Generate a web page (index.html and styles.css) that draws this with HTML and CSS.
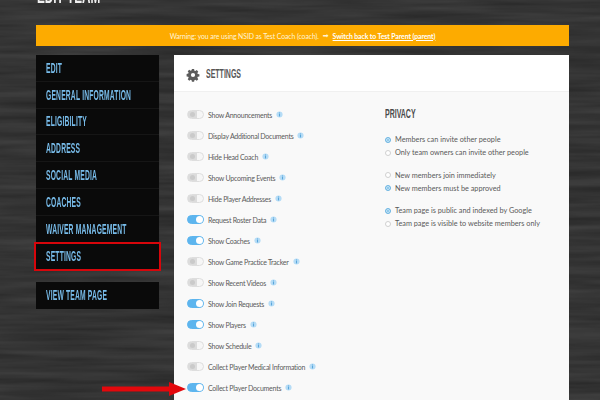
FILE: index.html
```html
<!DOCTYPE html>
<html lang="en">
<head>
<meta charset="utf-8">
<title>Edit Team</title>
<link rel="stylesheet" href="styles.css">
</head>
<body>
<svg class="wood" aria-hidden="true">
  <filter id="grain" x="0" y="0" width="100%" height="100%" color-interpolation-filters="sRGB">
    <feTurbulence type="fractalNoise" baseFrequency="0.008 0.13" numOctaves="3" seed="7"/>
    <feColorMatrix type="matrix" values="0.13 0 0 0 0.14  0.13 0 0 0 0.14  0.13 0 0 0 0.14  0 0 0 0 1"/>
  </filter>
  <rect width="600" height="400" filter="url(#grain)"/>
  <symbol id="info" viewBox="0 0 8 8">
    <circle cx="4" cy="4" r="3.500" fill="#b5dcf6"/>
    <rect x="3.400" y="3.300" width="1.200" height="2.900" fill="#5aa6da"/>
    <rect x="3.400" y="1.700" width="1.200" height="1.100" fill="#5aa6da"/>
  </symbol>
</svg>
<div class="page">
  <header class="top"><h1 class="title"><span class="squeeze">EDIT TEAM</span></h1></header>
  <div class="warning">
    <span>Warning: you are using NSID as Test Coach (coach).</span>
    <span class="arrow-glyph">➡</span>
    <a class="switch" href="#">Switch back to Test Parent (parent)</a>
  </div>
  <div class="columns">
    <nav class="side">
      <ul class="menu">
        <li class="item"><span class="squeeze">EDIT</span></li>
        <li class="item"><span class="squeeze">GENERAL INFORMATION</span></li>
        <li class="item"><span class="squeeze">ELIGIBILITY</span></li>
        <li class="item"><span class="squeeze">ADDRESS</span></li>
        <li class="item"><span class="squeeze">SOCIAL MEDIA</span></li>
        <li class="item"><span class="squeeze">COACHES</span></li>
        <li class="item"><span class="squeeze">WAIVER MANAGEMENT</span></li>
        <li class="item marked"><span class="squeeze">SETTINGS</span></li>
      </ul>
      <ul class="menu">
        <li class="item"><span class="squeeze">VIEW TEAM PAGE</span></li>
      </ul>
    </nav>
    <main class="panel">
      <div class="panel-head">
        <svg class="gear" viewBox="0 0 24 24"><path fill="#5b5b5b" fill-rule="evenodd" d="M9.800 0h4.400l.6 3.300 1.900.8 2.800-1.900 3.100 3.100-1.900 2.800.8 1.900 3.300.6v4.400l-3.300.6-.8 1.900 1.900 2.800-3.100 3.100-2.800-1.900-1.900.8-.6 3.300H9.800l-.6-3.300-1.900-.8-2.800 1.900-3.100-3.100 1.900-2.800-.8-1.900-3.300-.6V9.800l3.300-.6.8-1.900L1.400 4.500l3.100-3.100 2.800 1.900 1.900-.8zM12 7.800a4.200 4.200 0 1 0 0 8.400 4.200 4.200 0 0 0 0-8.400z"/></svg>
        <h2 class="panel-title"><span class="squeeze">SETTINGS</span></h2>
      </div>
      <div class="panel-body">
        <ul class="toggles">
          <li class="row"><span class="switcher"></span><span>Show Announcements</span><svg class="info"><use href="#info"/></svg></li>
          <li class="row"><span class="switcher"></span><span>Display Additional Documents</span><svg class="info"><use href="#info"/></svg></li>
          <li class="row"><span class="switcher"></span><span>Hide Head Coach</span><svg class="info"><use href="#info"/></svg></li>
          <li class="row"><span class="switcher"></span><span>Show Upcoming Events</span><svg class="info"><use href="#info"/></svg></li>
          <li class="row"><span class="switcher"></span><span>Hide Player Addresses</span><svg class="info"><use href="#info"/></svg></li>
          <li class="row"><span class="switcher on"></span><span>Request Roster Data</span><svg class="info"><use href="#info"/></svg></li>
          <li class="row"><span class="switcher on"></span><span>Show Coaches</span><svg class="info"><use href="#info"/></svg></li>
          <li class="row"><span class="switcher"></span><span>Show Game Practice Tracker</span><svg class="info"><use href="#info"/></svg></li>
          <li class="row"><span class="switcher"></span><span>Show Recent Videos</span><svg class="info"><use href="#info"/></svg></li>
          <li class="row"><span class="switcher on"></span><span>Show Join Requests</span><svg class="info"><use href="#info"/></svg></li>
          <li class="row"><span class="switcher on"></span><span>Show Players</span><svg class="info"><use href="#info"/></svg></li>
          <li class="row"><span class="switcher"></span><span>Show Schedule</span><svg class="info"><use href="#info"/></svg></li>
          <li class="row"><span class="switcher"></span><span>Collect Player Medical Information</span><svg class="info"><use href="#info"/></svg></li>
          <li class="row"><span class="switcher on"></span><span>Collect Player Documents</span><svg class="info"><use href="#info"/></svg></li>
        </ul>
        <section class="privacy">
          <h3 class="privacy-title"><span class="squeeze">PRIVACY</span></h3>
          <ul class="radios">
            <li class="radio-row"><span class="radio on"></span>Members can invite other people</li>
            <li class="radio-row"><span class="radio"></span>Only team owners can invite other people</li>
          </ul>
          <ul class="radios">
            <li class="radio-row"><span class="radio"></span>New members join immediately</li>
            <li class="radio-row"><span class="radio on"></span>New members must be approved</li>
          </ul>
          <ul class="radios">
            <li class="radio-row"><span class="radio on"></span>Team page is public and indexed by Google</li>
            <li class="radio-row"><span class="radio"></span>Team page is visible to website members only</li>
          </ul>
        </section>
      </div>
    </main>
  </div>
</div>
<svg class="red-arrow" viewBox="0 0 84 14" aria-hidden="true"><path fill="#e3080c" d="M0 4.500h67V0l17 7-17 7V9.500H0z"/></svg>
</body>
</html>
```
FILE: styles.css
```css
* { box-sizing: border-box; }
html, body { margin: 0; height: 100%; }
body {
  position: relative;
  height: 400px;
  overflow: hidden;
  font-family: Lato, "Liberation Sans", sans-serif;
  color: #555;
  background-color: #343434;
}
ul { list-style: none; margin: 0; padding: 0; }
.wood { position: absolute; left: 0; top: 0; width: 600px; height: 400px; }
.page { position: relative; padding: 0 31px 0 36px; height: 400px; overflow: hidden; filter: blur(.3px); }
.squeeze { display: inline-block; transform: scaleX(.56); transform-origin: left center; white-space: nowrap; }
.top { height: 25px; display: flex; align-items: flex-end; padding-bottom: 19px; }
.title {
  margin: 0 0 0 1px;
  font: 700 21px/20px "Liberation Sans", sans-serif;
  color: #f1f1f1;
  white-space: nowrap;
}
.warning {
  height: 21px;
  background: #fdab00;
  color: #fff3d6;
  font-size: 6.900px;
  letter-spacing: -.1px;
  display: flex;
  align-items: center;
  justify-content: center;
  gap: 4px;
}
.arrow-glyph { font-size: 7px; font-family: "DejaVu Sans", sans-serif; }
.switch { color: #fff; font-weight: 700; text-decoration: underline; }
.columns { display: flex; gap: 15px; margin-top: 9px; }
.side { width: 123px; flex: none; display: flex; flex-direction: column; gap: 12.600px; }
.menu { background: #0a0a0a; }
.item {
  height: 26.800px;
  padding-left: 10px;
  display: flex;
  align-items: center;
  font: 700 14px/1 "Liberation Sans", sans-serif;
  letter-spacing: .4px;
  color: #78bcea;
  border-bottom: 1px solid #161616;
  white-space: nowrap;
}
.item .squeeze { transform: scaleX(.48); }
.item:last-child { border-bottom: 0; }
.marked { position: relative; }
.marked::after {
  content: "";
  position: absolute;
  inset: -1px -2px -2px -2px;
  border: 2px solid #d7060b;
}
.panel { flex: 1; background: #f9f9f9; height: 345px; overflow: hidden; }
.panel-head {
  height: 37px;
  background: #fff;
  border-bottom: 1px solid #f0f0f0;
  padding: 3px 0 0 13px;
  display: flex;
  align-items: center;
  gap: 7px;
}
.gear { width: 12px; height: 12px; overflow: visible; flex: none; }
.panel-title {
  margin: 0;
  font: 700 12.500px/1 "Liberation Sans", sans-serif;
  color: #565656;
  white-space: nowrap;
}
.panel-body { display: flex; padding: 12px 0 0 13px; }
.toggles { width: 198px; flex: none; }
.row { height: 21px; display: flex; align-items: center; font-size: 7px; letter-spacing: -.25px; color: #5a5a5a; white-space: nowrap; }
.switcher {
  width: 17px;
  height: 9px;
  margin-right: 4px;
  border-radius: 5px;
  background: linear-gradient(90deg, #dcdcdc 0 60%, #f6f6f6 60%);
  border: 1px solid #dedede;
  position: relative;
  flex: none;
}
.switcher::after {
  content: "";
  position: absolute;
  left: 2px;
  top: 1px;
  width: 5px;
  height: 5px;
  border-radius: 50%;
  background: #cacaca;
}
.switcher.on { background: #5db5ee; border-color: #5db5ee; }
.switcher.on::after { left: auto; right: 0; top: 0; width: 7px; height: 7px; background: #fff; }
.info { width: 7px; height: 7px; margin-left: 4px; flex: none; }
.privacy { padding-top: 2px; font-size: 7.300px; color: #5a5a5a; }
.privacy-title {
  margin: 0 0 11px;
  font: 700 12.500px/16px "Liberation Sans", sans-serif;
  color: #4a4a4a;
}
.radios { margin-bottom: 9.500px; }
.radio-row { height: 13px; display: flex; align-items: center; gap: 4px; white-space: nowrap; }
.radio {
  width: 6px;
  height: 6px;
  border-radius: 50%;
  border: 1px solid #d0d0d0;
  background: #fff;
  flex: none;
}
.radio.on { background: #7bbfe8; border-color: #6fb6e2; box-shadow: inset 0 0 0 1px #d5ecf9; }
.red-arrow { position: absolute; left: 102px; top: 382px; width: 84px; height: 14px; }
```
